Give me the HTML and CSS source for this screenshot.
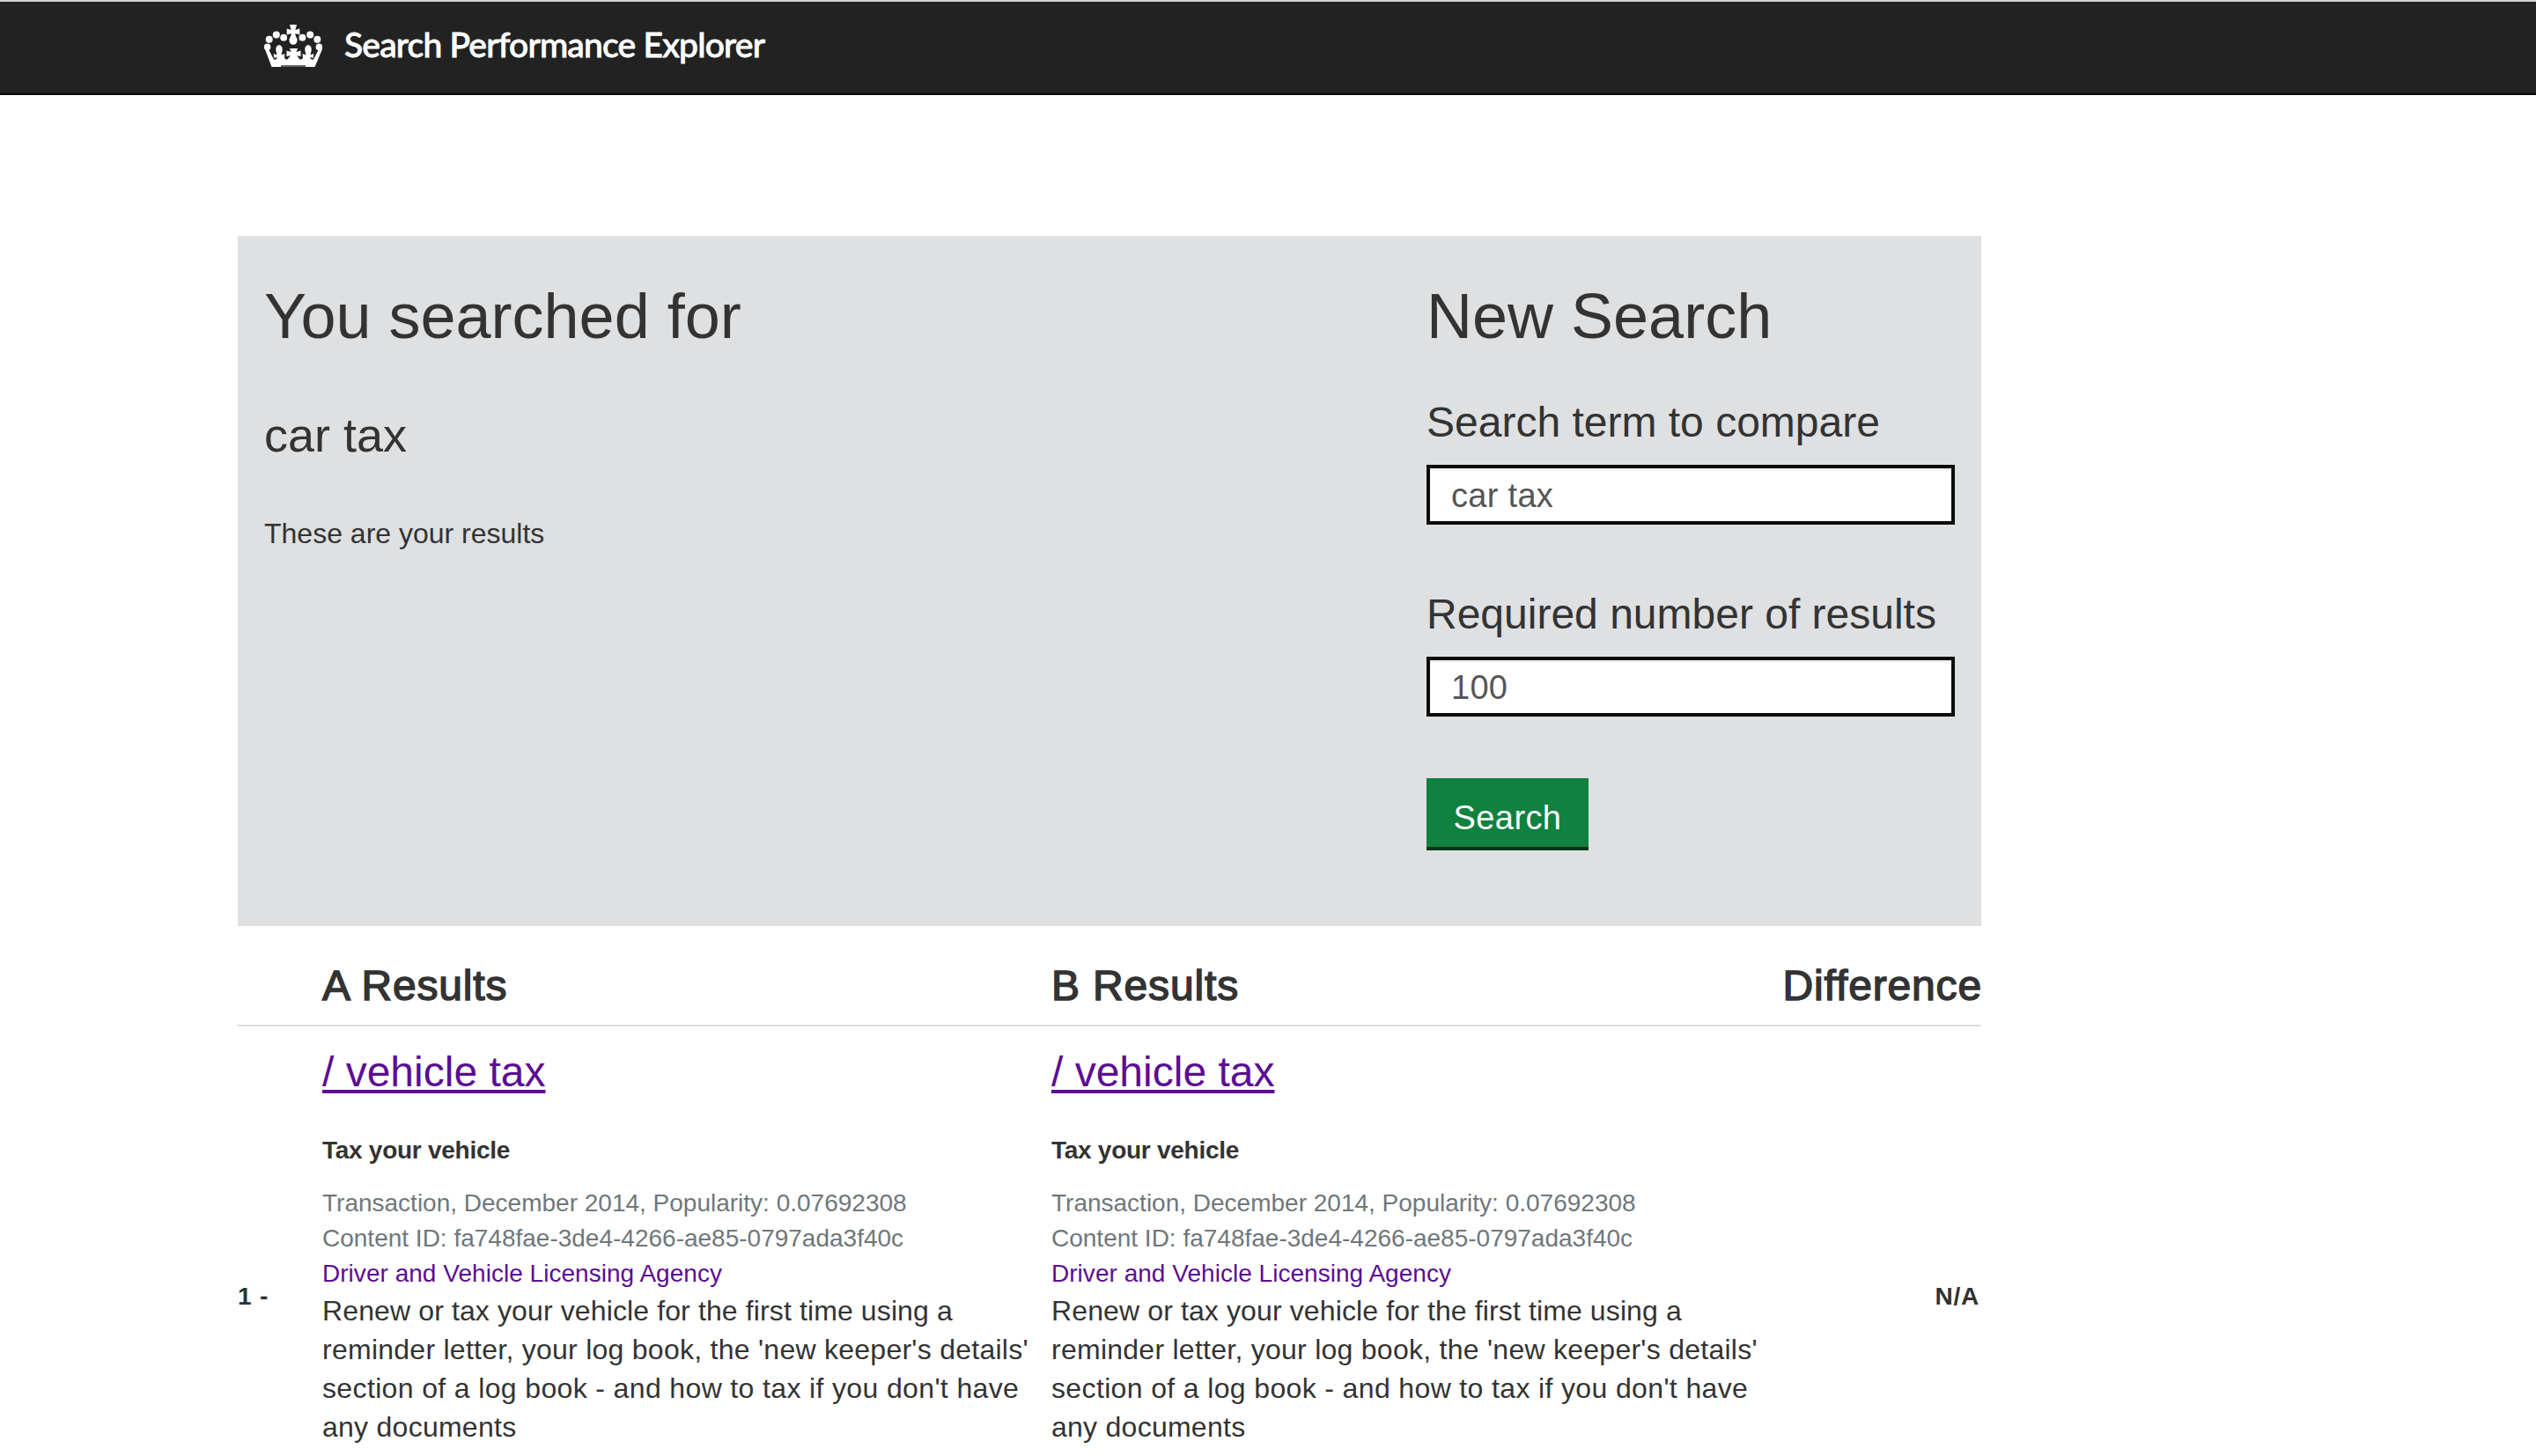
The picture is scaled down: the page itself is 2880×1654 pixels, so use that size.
FILE: index.html
```html
<!DOCTYPE html>
<html lang="en">
<head>
<meta charset="utf-8">
<title>Search Performance Explorer</title>
<link rel="stylesheet" href="styles.css">
</head>
<body>
<header class="site-header">
  <svg class="crown" viewBox="0 0 66 48" width="66" height="48" aria-hidden="true">
    <g fill="#fff">
      <path d="M29 0h8l-1.6 6 4.9-1.4v7L35.2 10l.8 4h-6l.8-4-5.1 1.6v-7L30.6 6z"/>
      <ellipse cx="33" cy="17.6" rx="4.6" ry="5.2"/>
      <circle cx="22.2" cy="14.7" r="3.9"/><circle cx="43.4" cy="14.7" r="3.9"/>
      <circle cx="13.8" cy="11.6" r="4"/><circle cx="52.2" cy="11.6" r="4"/>
      <circle cx="5.7" cy="16.8" r="4"/><circle cx="60.3" cy="16.8" r="4"/>
      <circle cx="3.6" cy="25.4" r="3.8"/><circle cx="62.4" cy="25.4" r="3.8"/>
      <path d="M1 28h4l6 11.5q3.200 1 4-2.500l-3.500 1-1-5 4 1.500-1.200-5.500q-.5-5 3.700-6 4.200 1 3.700 6l-1.200 5.500 4-1.500-.5 4.500q1 3 4 1.500l3-4-4.500 1.200v-6.700l5 1.500-1.500-4h9l-1.500 4 5-1.500v6.700l-4.500-1.200 3 4q3 1.500 4-1.500l-.5-4.500 4 1.500-1.200-5.500q-.5-5 3.700-6 4.200 1 3.700 6l-1.200 5.500 4-1.500-1 5-3.500-1q.8 3.500 4 2.500l6-11.500h4L57.500 48h-49z"/>
    </g>
    <path d="M19 46h28v2H19z" fill="#666"/>
  </svg>
  <span class="site-title">Search Performance Explorer</span>
</header>

<main class="page">
  <section class="panel">
    <div class="summary">
      <h1 class="heading">You searched for</h1>
      <h2 class="term">car tax</h2>
      <p class="note">These are your results</p>
    </div>
    <form class="search-form">
      <h1 class="heading">New Search</h1>
      <label class="label" for="term">Search term to compare</label>
      <input class="field" id="term" type="text" value="car tax">
      <label class="label label-next" for="count">Required number of results</label>
      <input class="field" id="count" type="text" value="100">
      <button class="submit" type="button">Search</button>
    </form>
  </section>

  <section class="results">
    <div class="row row-head">
      <span></span>
      <span>A Results</span>
      <span>B Results</span>
      <span class="difference">Difference</span>
    </div>
    <div class="row row-result">
      <strong class="rank">1 -</strong>
      <article class="result">
        <a class="path" href="#">/ vehicle tax</a>
        <h3 class="title">Tax your vehicle</h3>
        <p class="meta">Transaction, December 2014, Popularity: 0.07692308</p>
        <p class="meta">Content ID: fa748fae-3de4-4266-ae85-0797ada3f40c</p>
        <a class="agency" href="#">Driver and Vehicle Licensing Agency</a>
        <p class="description"><span class="line-open">Renew or tax your vehicle for the first time using a</span> reminder letter, your log book, the 'new keeper's details' <span class="line-wide">section of a log book - and how to tax if you don't have</span> any documents</p>
      </article>
      <article class="result">
        <a class="path" href="#">/ vehicle tax</a>
        <h3 class="title">Tax your vehicle</h3>
        <p class="meta">Transaction, December 2014, Popularity: 0.07692308</p>
        <p class="meta">Content ID: fa748fae-3de4-4266-ae85-0797ada3f40c</p>
        <a class="agency" href="#">Driver and Vehicle Licensing Agency</a>
        <p class="description"><span class="line-open">Renew or tax your vehicle for the first time using a</span> reminder letter, your log book, the 'new keeper's details' <span class="line-wide">section of a log book - and how to tax if you don't have</span> any documents</p>
      </article>
      <strong class="change">N/A</strong>
    </div>
  </section>
</main>
</body>
</html>
```
FILE: styles.css
```css
* { box-sizing: border-box; }

body {
  margin: 0;
  background: #fff;
  color: #333;
  font-family: "Liberation Sans", Arial, sans-serif;
}

h1, h2, h3, p { margin: 0; }

.site-header {
  display: flex;
  align-items: flex-start;
  height: 108px;
  padding-left: 300px;
  background: #222;
  border-top: 2px solid #d0d4d5;
  border-bottom: 2px solid #080808;
}

.crown { margin-top: 26px; }

.site-title {
  margin: 24px 0 0 25px;
  color: #fff;
  font: 500 39px/48px Lato, sans-serif;
  letter-spacing: -0.8px;
  -webkit-text-stroke: 0.8px #fff;
}

.page {
  width: 1980px;
  margin: 160px 0 0 270px;
}

.panel {
  display: flex;
  justify-content: space-between;
  height: 784px;
  padding: 52px 30px 0;
  background: #dee0e2;
}

.heading {
  font-size: 72px;
  font-weight: 400;
  line-height: 79px;
}

.term {
  margin-top: 65px;
  font-size: 54px;
  font-weight: 400;
  line-height: 60px;
}

.note {
  margin-top: 60px;
  font-size: 32px;
  line-height: 44px;
}

.search-form {
  display: flex;
  flex-direction: column;
  align-items: flex-start;
  width: 600px;
}

.label {
  margin-top: 51px;
  font-size: 48px;
  line-height: 60px;
}

.label-next { margin-top: 72px; }

.field {
  width: 600px;
  height: 68px;
  margin-top: 18px;
  padding: 2px 24px 0;
  border: 4px solid #0b0c0c;
  border-radius: 0;
  background: #fff;
  box-shadow: inset 0 2px 2px rgba(0, 0, 0, 0.075);
  color: #555;
  font: 38px "Liberation Sans", Arial, sans-serif;
  letter-spacing: 0.3px;
}

.submit {
  width: 184px;
  height: 82px;
  margin-top: 70px;
  padding: 23px 0 11px;
  border: 0;
  border-bottom: 4px solid #003618;
  background: #10813f;
  color: #fff;
  font: 38px/44px "Liberation Sans", Arial, sans-serif;
  letter-spacing: 0.4px;
}

.row {
  display: grid;
  grid-template-columns: 96px 828px 828px 228px;
}

.row-head {
  padding: 38px 0 14px;
  border-bottom: 2px solid #ddd;
  font-size: 48px;
  line-height: 60px;
  letter-spacing: 0.85px;
  -webkit-text-stroke: 1.5px #333;
}

.difference { margin-right: -1px; text-align: right; }

.row-result {
  height: 488px;
  padding-top: 22px;
}

.rank, .change {
  margin-top: 265px;
  font-size: 28px;
  line-height: 40px;
  letter-spacing: 0.8px;
}

.change {
  padding-right: 2px;
  text-align: right;
}

.path, .agency {
  display: block;
  width: max-content;
  color: #5c0d94;
}

.path {
  font-size: 48px;
  line-height: 60px;
  text-decoration: underline 4px;
  text-underline-offset: 4px;
}

.title {
  margin: 39px 0 20px;
  font-size: 28px;
  line-height: 40px;
  letter-spacing: -0.27px;
}

.meta, .agency {
  font-size: 28px;
  line-height: 40px;
}

.meta { color: #6f777b; }

.agency {
  letter-spacing: 0.03px;
  text-decoration: none;
}

.description {
  width: 812px;
  font-size: 32px;
  line-height: 44px;
  letter-spacing: 0.26px;
}

.line-open { letter-spacing: 0.12px; }

.line-wide { letter-spacing: 0.36px; }
```
